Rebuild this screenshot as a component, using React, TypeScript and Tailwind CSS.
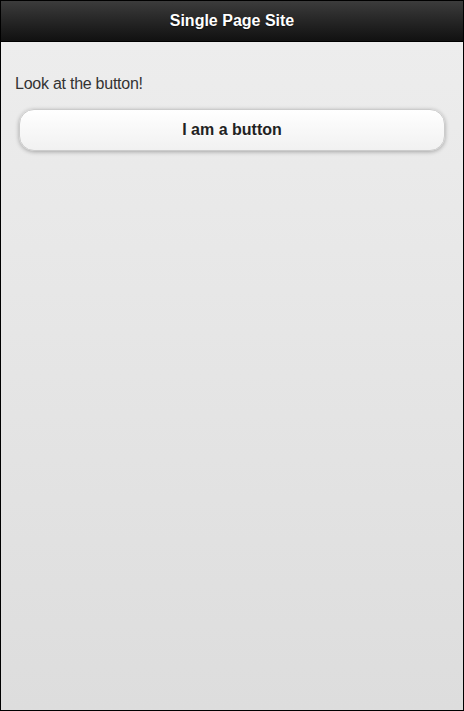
import React from 'react';

const App: React.FC = () => {
  return (
    <div
      className="w-[464px] h-[711px] border border-black flex flex-col bg-gradient-to-b from-[#eeeeee] to-[#dddddd]"
      style={{ fontFamily: '"Liberation Sans", Arial, sans-serif' }}
    >
      {/* Header */}
      <div className="h-[41px] shrink-0 border-b border-black bg-gradient-to-b from-[#3c3c3c] to-[#111111] flex items-center justify-center">
        <h1 className="text-white font-bold text-[16px] [text-shadow:0_1px_1px_#111]">Single Page Site</h1>
      </div>

      {/* Content */}
      <div className="px-[14px] pt-[32px]">
        <p className="text-[#333333] text-[16px] leading-[20px] tracking-[-0.25px]">Look at the button!</p>
        <button className="mt-[15px] ml-[4px] w-[426px] h-[42px] rounded-[15px] border border-[#cccccc] bg-gradient-to-b from-white to-[#f1f1f1] shadow-[0_1px_4px_rgba(0,0,0,0.3)] text-[#222222] font-bold text-[16px] [text-shadow:0_1px_0_#fff]">
          I am a button
        </button>
      </div>
    </div>
  );
};

export default App;
